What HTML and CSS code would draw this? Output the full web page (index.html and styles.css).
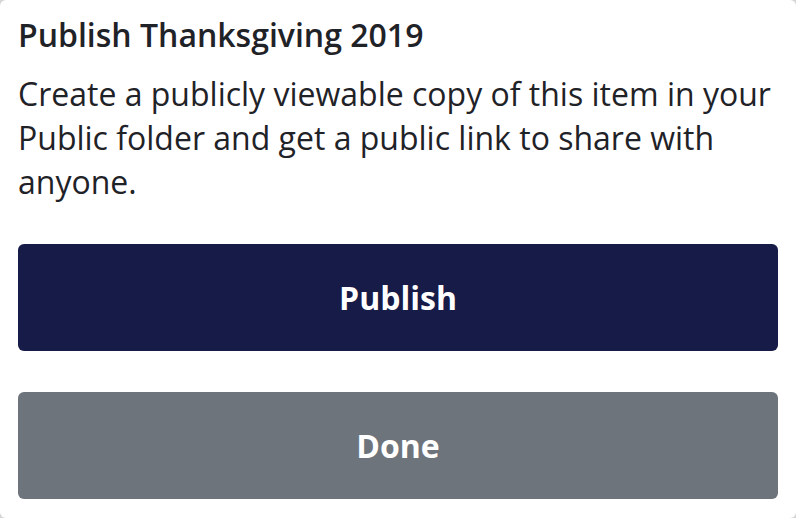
FILE: index.html
```html
<!DOCTYPE html>
<html lang="en">
<head>
<meta charset="utf-8">
<title>Publish Thanksgiving 2019</title>
<link rel="stylesheet" href="styles.css">
</head>
<body>
<div class="panel">
  <h1 class="title">Publish Thanksgiving 2019</h1>
  <p class="desc">Create a publicly viewable copy of this item in your Public folder and get a public link to share with anyone.</p>
  <div class="actions">
    <button class="btn btn-primary">Publish</button>
    <button class="btn btn-secondary">Done</button>
  </div>
</div>
</body>
</html>
```

FILE: styles.css
```css
html, body {
  margin: 0;
  padding: 0;
  height: 100%;
  background: #d6d6d6;
}
body {
  font-family: "Open Sans", "Noto Sans", sans-serif;
}
.panel {
  box-sizing: border-box;
  height: 100%;
  background: #ffffff;
  border-radius: 6px;
  padding: 17px 18px 0 18px;
  display: flex;
  flex-direction: column;
}
.title {
  margin: 0;
  font-size: 32px;
  line-height: 36px;
  font-weight: 600;
  color: #1f2227;
}
.desc {
  margin: 19px 0 0 0;
  font-size: 32px;
  line-height: 44px;
  font-weight: 400;
  color: #1f2227;
}
.actions {
  margin-top: 40px;
  display: flex;
  flex-direction: column;
  gap: 41px;
}
.btn {
  display: block;
  width: 100%;
  height: 107px;
  border: none;
  border-radius: 6px;
  font-family: "Open Sans", "Noto Sans", sans-serif;
  font-size: 32px;
  font-weight: 700;
  color: #ffffff;
  padding: 0;
}
.btn-primary {
  background: #161b47;
}
.btn-secondary {
  background: #6e747c;
}
```
